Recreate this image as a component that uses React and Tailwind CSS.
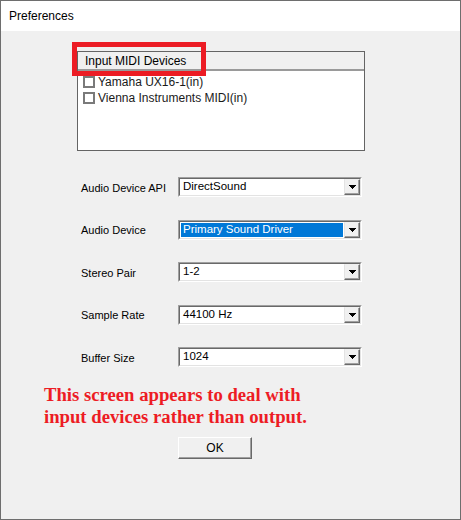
import React from 'react'

const fields = [
  { label: 'Audio Device API', value: 'DirectSound' },
  { label: 'Audio Device', value: 'Primary Sound Driver', selected: true },
  { label: 'Stereo Pair', value: '1-2' },
  { label: 'Sample Rate', value: '44100 Hz' },
  { label: 'Buffer Size', value: '1024' },
]

function DropArrow() {
  return (
    <svg width="7" height="4" viewBox="0 0 7 4" shapeRendering="crispEdges">
      <rect x="0" y="0" width="7" height="1" fill="#000" />
      <rect x="1" y="1" width="5" height="1" fill="#000" />
      <rect x="2" y="2" width="3" height="1" fill="#000" />
      <rect x="3" y="3" width="1" height="1" fill="#000" />
    </svg>
  )
}

function Combo({ value, selected }) {
  return (
    <div className="w-[184px] h-[20px] flex border border-t-[#a0a0a0] border-l-[#a0a0a0] border-r-white border-b-white">
      <div className="flex-1 flex border border-t-[#696969] border-l-[#696969] border-r-[#e3e3e3] border-b-[#e3e3e3] bg-white">
        {selected ? (
          <div className="flex-1 m-[1px] bg-[#0078d7] text-white text-[11.5px] flex items-center pl-[2px]">{value}</div>
        ) : (
          <div className="flex-1 text-[11.5px] flex items-center pl-[3px]">{value}</div>
        )}
        <div className="w-[16px] flex items-center justify-center bg-[#f0f0f0] border border-t-[#f0f0f0] border-l-[#e3e3e3] border-r-[#696969] border-b-[#696969] shadow-[inset_-1px_-1px_0_#a0a0a0]">
          <DropArrow />
        </div>
      </div>
    </div>
  )
}

function Checkbox({ label }) {
  return (
    <div className="h-[16px] flex items-center gap-[3px] pl-[5px]">
      <div className="w-[12px] h-[12px] border-2 border-[#7a7a7a] bg-white" />
      <span className="text-[12px] text-[#1a1a1a]">{label}</span>
    </div>
  )
}

export default function App() {
  return (
    <div className="relative w-[461px] h-[520px] flex flex-col border border-[#6e6e6e] bg-[#f0f0f0] text-black font-['Liberation_Sans',Arial,sans-serif]">
      {/* Title bar */}
      <div className="h-[30px] bg-white flex items-center pl-[8px] text-[12px]">Preferences</div>

      {/* Input devices list */}
      <div className="ml-[76px] mt-[20px] w-[288px] h-[100px] border border-[#646464] bg-white flex flex-col">
        <div className="h-[19px] bg-[#f0f0f0] border-b-2 border-[#9a9a9a] flex items-center pl-[7px] text-[12px]">
          Input MIDI Devices
        </div>
        <div className="pt-[3px]">
          <Checkbox label="Yamaha UX16-1(in)" />
          <Checkbox label="Vienna Instruments MIDI(in)" />
        </div>
      </div>

      {/* Settings */}
      <div className="mt-[26px] ml-[80px] flex flex-col gap-[22.5px]">
        {fields.map((f) => (
          <div key={f.label} className="flex items-center h-[20px]">
            <div className="w-[97px] text-[11px] pt-[2px]">{f.label}</div>
            <Combo value={f.value} selected={f.selected} />
          </div>
        ))}
      </div>

      {/* Annotation */}
      <div className="mt-[17px] pl-[43px] font-['Liberation_Serif','Times_New_Roman',serif] font-bold text-[18.7px] leading-[22px] text-[#ed1c24]">
        <div>This screen appears to deal with</div>
        <div>input devices rather than output.</div>
      </div>

      <button className="mt-[9px] ml-[177px] w-[74px] h-[22px] bg-[#f0f0f0] border border-t-white border-l-white border-r-[#696969] border-b-[#696969] shadow-[inset_-1px_-1px_0_#a0a0a0] text-[12px] flex items-center justify-center">
        OK
      </button>

      {/* Red highlight box */}
      <div className="absolute left-[71px] top-[41px] w-[134px] h-[34px] border-[5px] border-[#ec1c24]" />
    </div>
  )
}
